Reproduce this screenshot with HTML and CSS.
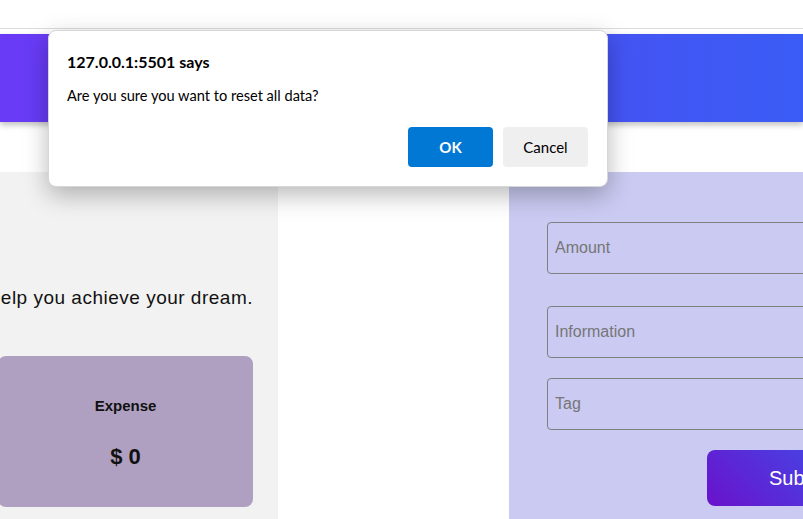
FILE: index.html
```html
<!DOCTYPE html>
<html>
<head>
<meta charset="utf-8">
<link rel="stylesheet" href="styles.css">
</head>
<body>
<div class="topbar"></div>
<header class="header"></header>
<main class="main">
  <section class="left">
    <p class="tagline">elp you achieve your dream.</p>
    <div class="card">
      <div class="card-title">Expense</div>
      <div class="card-value">$ 0</div>
    </div>
  </section>
  <section class="middle"></section>
  <section class="right">
    <input class="field" type="text" placeholder="Amount">
    <input class="field gap-lg" type="text" placeholder="Information">
    <input class="field" type="text" placeholder="Tag">
    <div class="actions"><button class="submit">Submit</button></div>
  </section>
</main>
<div class="dialog">
  <div class="dialog-title">127.0.0.1:5501 says</div>
  <div class="dialog-msg">Are you sure you want to reset all data?</div>
  <div class="dialog-buttons">
    <button class="btn btn-ok">OK</button>
    <button class="btn btn-cancel">Cancel</button>
  </div>
</div>
</body>
</html>
```

FILE: styles.css
```css
* { box-sizing: border-box; }
html, body { margin: 0; padding: 0; }
body {
  width: 803px;
  height: 519px;
  overflow: hidden;
  background: #fff;
  font-family: "Liberation Sans", Arial, sans-serif;
}
.topbar {
  height: 29px;
  border-bottom: 1px solid #dcdcdc;
}
.header {
  margin-top: 5px;
  height: 88px;
  background: linear-gradient(90deg, #6a3af6 0%, #4b4ff2 60%, #3a5cf5 100%);
  box-shadow: 0 3px 6px rgba(0,0,0,0.25);
  position: relative;
}
.main {
  margin-top: 50px;
  display: flex;
  height: 347px;
}
.left {
  width: 278px;
  flex: none;
  background: #f2f2f2;
  overflow: hidden;
  padding-top: 114px;
  padding-right: 25px;
  display: flex;
  flex-direction: column;
  align-items: flex-end;
}
.tagline {
  margin: 0;
  font-size: 19px;
  letter-spacing: 0.5px;
  line-height: 24px;
  white-space: nowrap;
  color: #111;
}
.card {
  margin-top: 46px;
  width: 255px;
  height: 151px;
  flex: none;
  background: #afa0c1;
  border-radius: 8px;
  display: flex;
  flex-direction: column;
  align-items: center;
  padding-top: 41px;
}
.card-title {
  font-weight: bold;
  font-size: 15px;
  line-height: 18px;
  color: #111;
}
.card-value {
  margin-top: 29px;
  font-weight: bold;
  font-size: 22px;
  line-height: 26px;
  color: #111;
}
.middle {
  width: 231px;
  flex: none;
  background: #fff;
}
.right {
  flex: 1;
  background: #cacaf2;
  padding: 50px 0 0 38px;
  display: flex;
  flex-direction: column;
  min-width: 0;
}
.field {
  display: block;
  width: 300px;
  height: 52px;
  flex: none;
  border: 1px solid #808080;
  border-radius: 4px;
  background: transparent;
  padding: 0 7px;
  font-family: "Liberation Sans", Arial, sans-serif;
  font-size: 16px;
  margin-bottom: 20px;
}
.field.gap-lg { margin-top: 12px; }
.field::placeholder { color: #767676; }
.actions {
  display: flex;
  padding-left: 160px;
}
.submit {
  flex: none;
  width: 150px;
  height: 56px;
  border: none;
  border-radius: 8px;
  background: linear-gradient(45deg, #6a12cc 0%, #3f4fe8 100%);
  color: #fff;
  font-family: "Liberation Sans", Arial, sans-serif;
  font-size: 20px;
  text-align: left;
  padding-left: 62px;
}
.dialog {
  position: absolute;
  left: 48px;
  top: 30px;
  width: 560px;
  height: 157px;
  background: #fff;
  border: 1px solid #d6d6d6;
  border-radius: 8px;
  box-shadow: 0 8px 24px rgba(0,0,0,0.28);
  padding: 19px 19px 0 18px;
  font-family: Lato, "Noto Sans", sans-serif;
}
.dialog-title {
  font-weight: bold;
  font-size: 16px;
  line-height: 24px;
  color: #000;
}
.dialog-msg {
  margin-top: 11px;
  font-size: 14.6px;
  line-height: 22px;
  color: #000;
}
.dialog-buttons {
  margin-top: 20px;
  display: flex;
  justify-content: flex-end;
  gap: 10px;
}
.btn {
  width: 85px;
  height: 40px;
  border: none;
  border-radius: 4px;
  font-family: Lato, "Noto Sans", sans-serif;
  font-size: 15px;
}
.btn-ok { background: #0078d4; color: #fff; font-weight: bold; }
.btn-cancel { background: #efefef; color: #000; }
```
